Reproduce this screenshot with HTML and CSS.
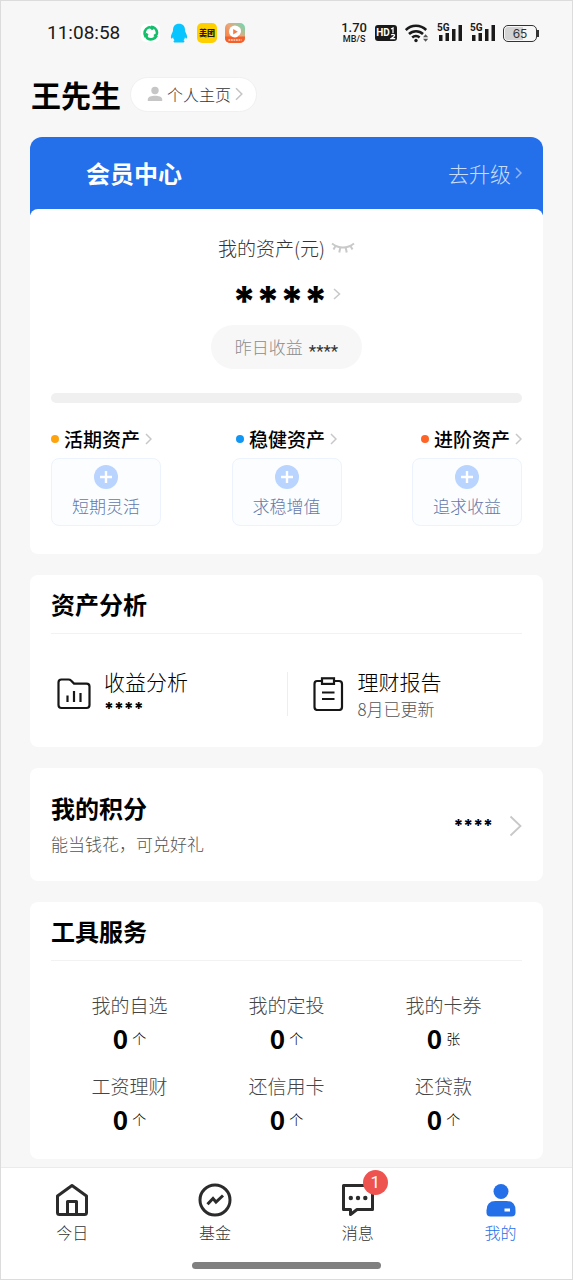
FILE: index.html
```html
<!DOCTYPE html>
<html lang="zh-CN">
<head>
<meta charset="utf-8">
<meta name="viewport" content="width=device-width, initial-scale=1">
<title>我的</title>
<link rel="stylesheet" href="styles.css">
</head>
<body>
<div class="screen">
  <div class="status">
    <time class="clock">11:08:58</time>
    <div class="apps">
      <svg width="20" height="20" viewBox="0 0 20 20"><rect x="0" y="1" width="19" height="18" rx="5" fill="#fff"/><g fill="none" stroke="#13bf6b" stroke-width="2.6"><path d="M4.600 14A6.400 6.400 0 0 1 7.500 4.400Q10.500 3.600 12 6.600"/><path d="M10 3.800A6.400 6.400 0 0 1 16 9.500Q16 12.800 12.800 12.500"/><path d="M15.800 12.500A6.400 6.400 0 0 1 6.500 15.400Q4.300 13.500 6.400 10.500"/></g></svg>
      <svg width="20" height="20" viewBox="0 0 20 20"><path d="M10 .8c-4 0-6 2.700-6 6.200 0 1-.2 1.500-.8 2.800C2 12 1.500 14.500 2.300 15.400c.6.500 1.200-.4 1.700-1.200.2 1.300.7 2.200 1.500 3-1.200.5-1.500 2.200.8 2.200h7.400c2.300 0 2-1.700.8-2.200.8-.8 1.300-1.700 1.500-3 .5.800 1.100 1.700 1.700 1.200.8-.9.300-3.400-.9-5.600C16.200 8.500 16 8 16 7c0-3.500-2-6.200-6-6.200z" fill="#09c5ff"/></svg>
      <span class="app-mt">美团</span>
      <svg width="20" height="20" viewBox="0 0 20 20"><defs><linearGradient id="g1" x1="0" y1="1" x2="1" y2="0"><stop offset=".25" stop-color="#f58a4b"/><stop offset=".55" stop-color="#e9a77c"/><stop offset="1" stop-color="#5fe0b8"/></linearGradient></defs><rect x="0" y="0" width="20" height="20" rx="5" fill="url(#g1)"/><path d="M0 13.500h20V15a5 5 0 0 1-5 5H5a5 5 0 0 1-5-5z" fill="#f4602c"/><path d="M10 2.500a6 6 0 1 0 0 12Q12.500 14.300 14.800 11.500 17 8.500 15.200 5 13 2.500 10 2.500z" fill="#fff"/><path d="M8.200 6v5.400L12.800 8.700z" fill="#f08048"/><path d="M3.500 17h13" stroke="#ffd8c4" stroke-width="1.600" stroke-dasharray="1.800 .7"/></svg>
    </div>
    <div class="net">
      <span class="speed"><b>1.70</b><small>MB/S</small></span>
      <span class="hd">HD<svg width="6" height="13" viewBox="0 0 6 13" fill="none" stroke="#fff" stroke-width="1.300"><path d="M1 2 3 1V6M1.200 8Q3 6.600 4.500 8 5 9.200 1.200 11.600H5.200"/></svg></span>
      <svg width="24" height="20" viewBox="0 0 24 20" fill="none" stroke="#1a1a1a" stroke-width="2.500"><path d="M.8 7A14.500 14.500 0 0 1 21.200 7"/><path d="M4 11A10 10 0 0 1 18 11"/><path d="M7.200 14.500A5.600 5.600 0 0 1 14.600 14.500"/><circle cx="11" cy="17.500" r="1.700" fill="#1a1a1a" stroke="none"/><path d="M18 14.200l2.600-3 2.600 3zM18 15.800l2.600 3 2.600-3z" fill="#555" stroke="none"/></svg>
      <span class="signal"><em>5G</em><svg width="25" height="18" viewBox="0 0 25 18" fill="#1a1a1a"><rect x="2" y="11" width="3.500" height="6"/><rect x="8.500" y="9" width="3.500" height="8"/><rect x="15" y="5" width="3.500" height="12"/><rect x="21.500" y="1" width="3.500" height="16"/></svg></span>
      <span class="signal"><em>5G</em><svg width="25" height="18" viewBox="0 0 25 18" fill="#1a1a1a"><rect x="2" y="11" width="3.500" height="6"/><rect x="8.500" y="9" width="3.500" height="8"/><rect x="15" y="5" width="3.500" height="12"/><rect x="21.500" y="1" width="3.500" height="16"/></svg></span>
      <span class="battery">65</span>
    </div>
  </div>

  <header class="profile">
    <h1>王先生</h1>
    <a class="home-link" href="#">
      <svg width="16" height="16" viewBox="0 0 16 16" fill="#c6c6c6"><circle cx="8" cy="4.500" r="3.700"/><path d="M.8 15v-1.500C.8 10.800 4.500 9.800 8 9.800s7.200 1 7.200 3.700V15z"/></svg>
      个人主页
      <svg width="8" height="14" viewBox="0 0 8 14" fill="none" stroke="#c4c4c4" stroke-width="1.500"><path d="M1 1.200 6.800 7 1 12.800"/></svg>
    </a>
  </header>

  <main class="cards">
    <section class="member">
      <div class="member-head">
        <h2>会员中心</h2>
        <a href="#">去升级<svg width="7" height="12" viewBox="0 0 7 12" fill="none" stroke="#8fb6f8" stroke-width="1.500"><path d="M1 1 6 6 1 11"/></svg></a>
      </div>
      <div class="card assets">
        <div class="assets-label">我的资产(元)
          <button type="button" aria-label="显示金额"><svg width="24" height="14" viewBox="0 0 24 14" fill="none" stroke="#c9c9c9" stroke-width="2"><path d="M1 2.500Q6 6.500 12 6.500T23 2.500M4.500 5 2.500 8.500M9.300 6.500 8.300 11.500M14.700 6.500 15.700 11.500M19.500 5 21.500 8.500"/></svg></button>
        </div>
        <a class="total" href="#"><span>****</span><svg width="8" height="12" viewBox="0 0 8 12" fill="none" stroke="#c8c8c8" stroke-width="1.500"><path d="M1 1 6.500 6 1 11"/></svg></a>
        <div class="yesterday">昨日收益<span>****</span></div>
        <div class="meter"></div>
        <div class="kinds">
          <div class="kind">
            <a class="kind-name amber" href="#">活期资产<svg width="7" height="12" viewBox="0 0 7 12" fill="none" stroke="#c8c8c8" stroke-width="1.500"><path d="M1 1 6 6 1 11"/></svg></a>
            <button class="add" type="button"><svg width="24" height="24" viewBox="0 0 24 24"><circle cx="12" cy="12" r="12" fill="#b9d4ff"/><path d="M12 6v12M6 12h12" stroke="#fff" stroke-width="2.400"/></svg>短期灵活</button>
          </div>
          <div class="kind">
            <a class="kind-name blue" href="#">稳健资产<svg width="7" height="12" viewBox="0 0 7 12" fill="none" stroke="#c8c8c8" stroke-width="1.500"><path d="M1 1 6 6 1 11"/></svg></a>
            <button class="add" type="button"><svg width="24" height="24" viewBox="0 0 24 24"><circle cx="12" cy="12" r="12" fill="#b9d4ff"/><path d="M12 6v12M6 12h12" stroke="#fff" stroke-width="2.400"/></svg>求稳增值</button>
          </div>
          <div class="kind">
            <a class="kind-name orange" href="#">进阶资产<svg width="7" height="12" viewBox="0 0 7 12" fill="none" stroke="#c8c8c8" stroke-width="1.500"><path d="M1 1 6 6 1 11"/></svg></a>
            <button class="add" type="button"><svg width="24" height="24" viewBox="0 0 24 24"><circle cx="12" cy="12" r="12" fill="#b9d4ff"/><path d="M12 6v12M6 12h12" stroke="#fff" stroke-width="2.400"/></svg>追求收益</button>
          </div>
        </div>
      </div>
    </section>

    <section class="card">
      <h2 class="ruled">资产分析</h2>
      <div class="analysis">
        <a class="entry" href="#">
          <svg width="34" height="34" viewBox="0 0 34 34" fill="none" stroke="#161616" stroke-width="2.200"><path d="M1.500 28V5.500Q1.500 2.500 4.500 2.500H11.500Q13 2.500 14 3.600L17 6.600H29.500Q32.500 6.600 32.500 9.600V28Q32.500 31 29.500 31H4.500Q1.500 31 1.500 28Z"/><path d="M10.500 18.500V25M17 14V25M23.500 16V25"/></svg>
          <span class="entry-text"><span>收益分析</span><b>****</b></span>
        </a>
        <a class="entry" href="#">
          <svg width="34" height="34" viewBox="0 0 34 34" fill="none" stroke="#161616" stroke-width="2.200"><path d="M11 4H6Q3.500 4 3.500 7V30Q3.500 33 6.500 33H28Q31 33 31 30V7Q31 4 28 4H23.500"/><rect x="11" y="1.300" width="12" height="5.600"/><path d="M11 15.500H23.500M11 22H23.500"/></svg>
          <span class="entry-text"><span>理财报告</span><small>8月已更新</small></span>
        </a>
      </div>
    </section>

    <section class="card">
      <a class="points" href="#">
        <div><h2>我的积分</h2><p>能当钱花，可兑好礼</p></div>
        <b>****</b>
        <svg width="13" height="22" viewBox="0 0 13 22" fill="none" stroke="#c8c8c8" stroke-width="1.800"><path d="M1.500 1.500 11.500 11 1.500 20.500"/></svg>
      </a>
    </section>

    <section class="card">
      <h2 class="ruled">工具服务</h2>
      <div class="tools">
        <a href="#">我的自选<span><b>0</b>个</span></a>
        <a href="#">我的定投<span><b>0</b>个</span></a>
        <a href="#">我的卡券<span><b>0</b>张</span></a>
        <a href="#">工资理财<span><b>0</b>个</span></a>
        <a href="#">还信用卡<span><b>0</b>个</span></a>
        <a href="#">还贷款<span><b>0</b>个</span></a>
      </div>
    </section>
  </main>

  <nav class="tabs">
    <div class="tab-row">
      <a href="#"><svg width="34" height="34" viewBox="0 0 34 34" fill="none" stroke="#2b2b2b" stroke-width="3" stroke-linejoin="round"><path d="M2.500 13 17 2.500 31.500 13V29.500Q31.500 31.500 29.500 31.500H4.500Q2.500 31.500 2.500 29.500Z"/><path d="M12.500 31V18.500H21.500V31"/></svg>今日</a>
      <a href="#"><svg width="34" height="34" viewBox="0 0 34 34" fill="none" stroke="#2b2b2b" stroke-width="3"><circle cx="17" cy="17" r="15"/><path d="M9.500 21.300 15 15.500 18 19 25 12.500"/></svg>基金</a>
      <a href="#"><span class="badged"><svg width="34" height="34" viewBox="0 0 34 34" fill="none" stroke="#2b2b2b" stroke-width="3"><path d="M2.500 2.500H31.500V26.500H16L9.500 31.500V26.500H2.500Z" stroke-linejoin="round"/><g fill="#2b2b2b" stroke="none"><circle cx="9.800" cy="15" r="2.200"/><circle cx="17" cy="15" r="2.200"/><circle cx="24.300" cy="15" r="2.200"/></g></svg><span class="badge">1</span></span>消息</a>
      <a class="active" href="#" aria-current="page"><svg width="34" height="34" viewBox="0 0 34 34" fill="#2470e8"><circle cx="17" cy="8.500" r="7.500"/><path d="M2.500 27.500Q2.500 18 11.500 18H22.500Q31.500 18 31.500 27.500V29.500Q31.500 33.500 27.500 33.500H6.500Q2.500 33.500 2.500 29.500Z"/><rect x="20.500" y="25.500" width="5.500" height="3" fill="#fff"/></svg>我的</a>
    </div>
    <div class="grip"></div>
  </nav>
</div>
</body>
</html>
```
FILE: styles.css
```css
* { box-sizing: border-box; }
body {
  margin: 0;
  background: #f7f7f7;
  color: #000;
  font-family: "Noto Sans CJK SC", sans-serif;
  font-weight: 300;
}
h1, h2, p { margin: 0; }
a { color: inherit; text-decoration: none; }
button { padding: 0; border: 0; background: none; font: inherit; color: inherit; }
svg { display: block; flex: none; }

.screen {
  display: flex;
  flex-direction: column;
  min-height: 100vh;
  border: 1px solid #dcdcdc;
}

/* status bar */
.status {
  display: flex;
  align-items: center;
  height: 64px;
  padding: 0 33px 0 46px;
  color: #1a1a1a;
}
.clock { width: 94px; font: 400 19px/24px Roboto, sans-serif; }
.apps { display: flex; gap: 8px; }
.app-mt {
  width: 20px;
  height: 20px;
  border-radius: 5px;
  background: #ffd000;
  font-size: 8px;
  font-weight: 900;
  line-height: 19px;
  text-align: center;
}
.net { display: flex; align-items: center; gap: 8px; margin-left: auto; }
.speed { display: flex; flex-direction: column; align-items: center; font-family: Roboto, sans-serif; }
.speed b { font-size: 13px; line-height: 12px; font-weight: 500; }
.speed small { font-size: 9px; line-height: 10px; font-weight: 500; }
.hd {
  display: flex;
  align-items: center;
  justify-content: center;
  width: 22px;
  height: 16px;
  border-radius: 3px;
  background: #1a1a1a;
  color: #fff;
  font: 700 10px/16px Roboto, sans-serif;
}
.signal { position: relative; }
.signal em {
  position: absolute;
  left: 0;
  top: -1px;
  background: #f7f7f7;
  font: 700 10px/9px Roboto, sans-serif;
}
.battery {
  position: relative;
  width: 34px;
  height: 17px;
  margin-right: 2px;
  border: 1px solid #333;
  border-radius: 5px;
  background: linear-gradient(90deg, #d3d3d3 60%, #f7f7f7 60%) content-box;
  padding: 1px;
  color: #333;
  font: 400 12px/13px Inter, sans-serif;
  text-align: center;
}
.battery::after {
  content: "";
  position: absolute;
  right: -3px;
  top: 4px;
  width: 2px;
  height: 7px;
  background: #333;
}

/* profile */
.profile { display: flex; align-items: center; gap: 9px; height: 58px; padding: 0 30px; }
.profile h1 { font-size: 30px; line-height: 44px; font-weight: 700; }
.home-link {
  display: flex;
  align-items: center;
  gap: 4px;
  height: 35px;
  padding: 0 13px 0 16px;
  border: 1px solid #f0f0f0;
  border-radius: 18px;
  background: #fff;
  color: #333;
  font-size: 16px;
}

/* cards */
.cards { display: flex; flex-direction: column; flex: 1; gap: 21px; padding: 14px 29px 8px; }
.card { padding: 0 21px; border-radius: 8px; background: #fff; }
h2 { font-size: 24px; line-height: 36px; font-weight: 700; }
.ruled { padding: 11px 0; border-bottom: 1px solid #f2f2f2; }

.member {
  border-radius: 12px 12px 8px 8px;
  background: linear-gradient(#2470eb 78px, transparent 78px);
}
.member-head {
  display: flex;
  align-items: center;
  justify-content: space-between;
  height: 72px;
  padding: 0 21px 0 56px;
}
.member-head h2 { color: #fff; }
.member-head a { display: flex; align-items: center; gap: 4px; color: #c8dcfb; font-size: 21px; }

.assets {
  display: flex;
  flex-direction: column;
  align-items: center;
  padding-top: 25px;
  padding-bottom: 28px;
}
.assets-label { display: flex; align-items: center; gap: 6px; color: #333; font-size: 19px; line-height: 28px; }
.total { display: flex; align-items: center; gap: 5px; height: 44px; margin: 10px 0 9px; }
.total span { height: 44px; font: 800 41px/58px Inter, sans-serif; }
.yesterday {
  display: flex;
  gap: 6px;
  height: 44px;
  padding: 0 24px;
  border-radius: 22px;
  background: #f7f7f7;
  color: #8c8c8c;
  font-size: 17px;
  line-height: 44px;
}
.yesterday span { color: #333; font: 400 17px/52px Roboto, sans-serif; }
.meter { width: 100%; height: 10px; margin: 24px 0 22px; border-radius: 5px; background: #f0f0f0; }
.kinds { display: flex; justify-content: space-between; width: 100%; }
.kind { display: flex; flex-direction: column; align-items: center; gap: 5px; width: 110px; }
.kind:first-child { align-items: flex-start; }
.kind:last-child { align-items: flex-end; }
.kind-name { display: flex; align-items: center; gap: 5px; font-size: 19px; line-height: 28px; font-weight: 500; }
.kind-name::before { content: ""; width: 8px; height: 8px; border-radius: 50%; }
.amber::before { background: #ffa30d; }
.blue::before { background: #1296f3; }
.orange::before { background: #ff6426; }
.add {
  display: flex;
  flex-direction: column;
  align-items: center;
  gap: 4px;
  width: 100%;
  height: 68px;
  padding-top: 6px;
  border: 1px solid #edf3fd;
  border-radius: 8px;
  background: #fbfdff;
  color: #6578aa;
  font-size: 17px;
  line-height: 26px;
}

/* analysis */
.analysis { display: grid; grid-template-columns: 1fr 1fr; padding: 32px 0 25px; }
.entry { display: flex; align-items: center; gap: 13px; padding-left: 6px; }
.entry + .entry {
  padding-left: 24px;
  background: linear-gradient(#eee, #eee) left center / 1px 44px no-repeat;
}
.entry-text { display: flex; flex-direction: column; font-size: 21px; line-height: 30px; }
.entry-text small { color: #555; font-size: 17px; line-height: 26px; }
.entry-text b { font: 800 17px/26px Inter, sans-serif; }

/* points */
.points { display: flex; align-items: center; padding: 22px 0 19px; }
.points div { flex: 1; }
.points p { color: #555; font-size: 17px; line-height: 36px; }
.points b { margin-right: 16px; font: 800 17px/24px Inter, sans-serif; }

/* tools */
.tools { display: grid; grid-template-columns: repeat(3, 1fr); row-gap: 15px; padding: 30px 0 21px; }
.tools a { display: flex; flex-direction: column; align-items: center; color: #444; font-size: 19px; line-height: 28px; }
.tools span { display: flex; align-items: center; gap: 4px; height: 38px; color: #000; font-size: 14px; }
.tools b { font-size: 26px; line-height: 38px; font-weight: 700; }

/* tab bar */
.tabs { padding: 15px 0 10px; border-top: 1px solid #ebebeb; background: #fff; }
.tab-row { display: flex; }
.tab-row a {
  display: flex;
  flex: 1;
  flex-direction: column;
  align-items: center;
  gap: 2px;
  color: #333;
  font-size: 16px;
  line-height: 26px;
}
.tab-row .active { color: #2470e8; }
.badged { position: relative; }
.badge {
  position: absolute;
  left: 22px;
  top: -13px;
  width: 25px;
  height: 25px;
  border-radius: 50%;
  background: #ee5350;
  color: #fff;
  font: 400 17px/25px Roboto, sans-serif;
  text-align: center;
}
.grip { width: 33%; height: 7px; margin: 17px auto 0; border-radius: 4px; background: #808080; }
```
